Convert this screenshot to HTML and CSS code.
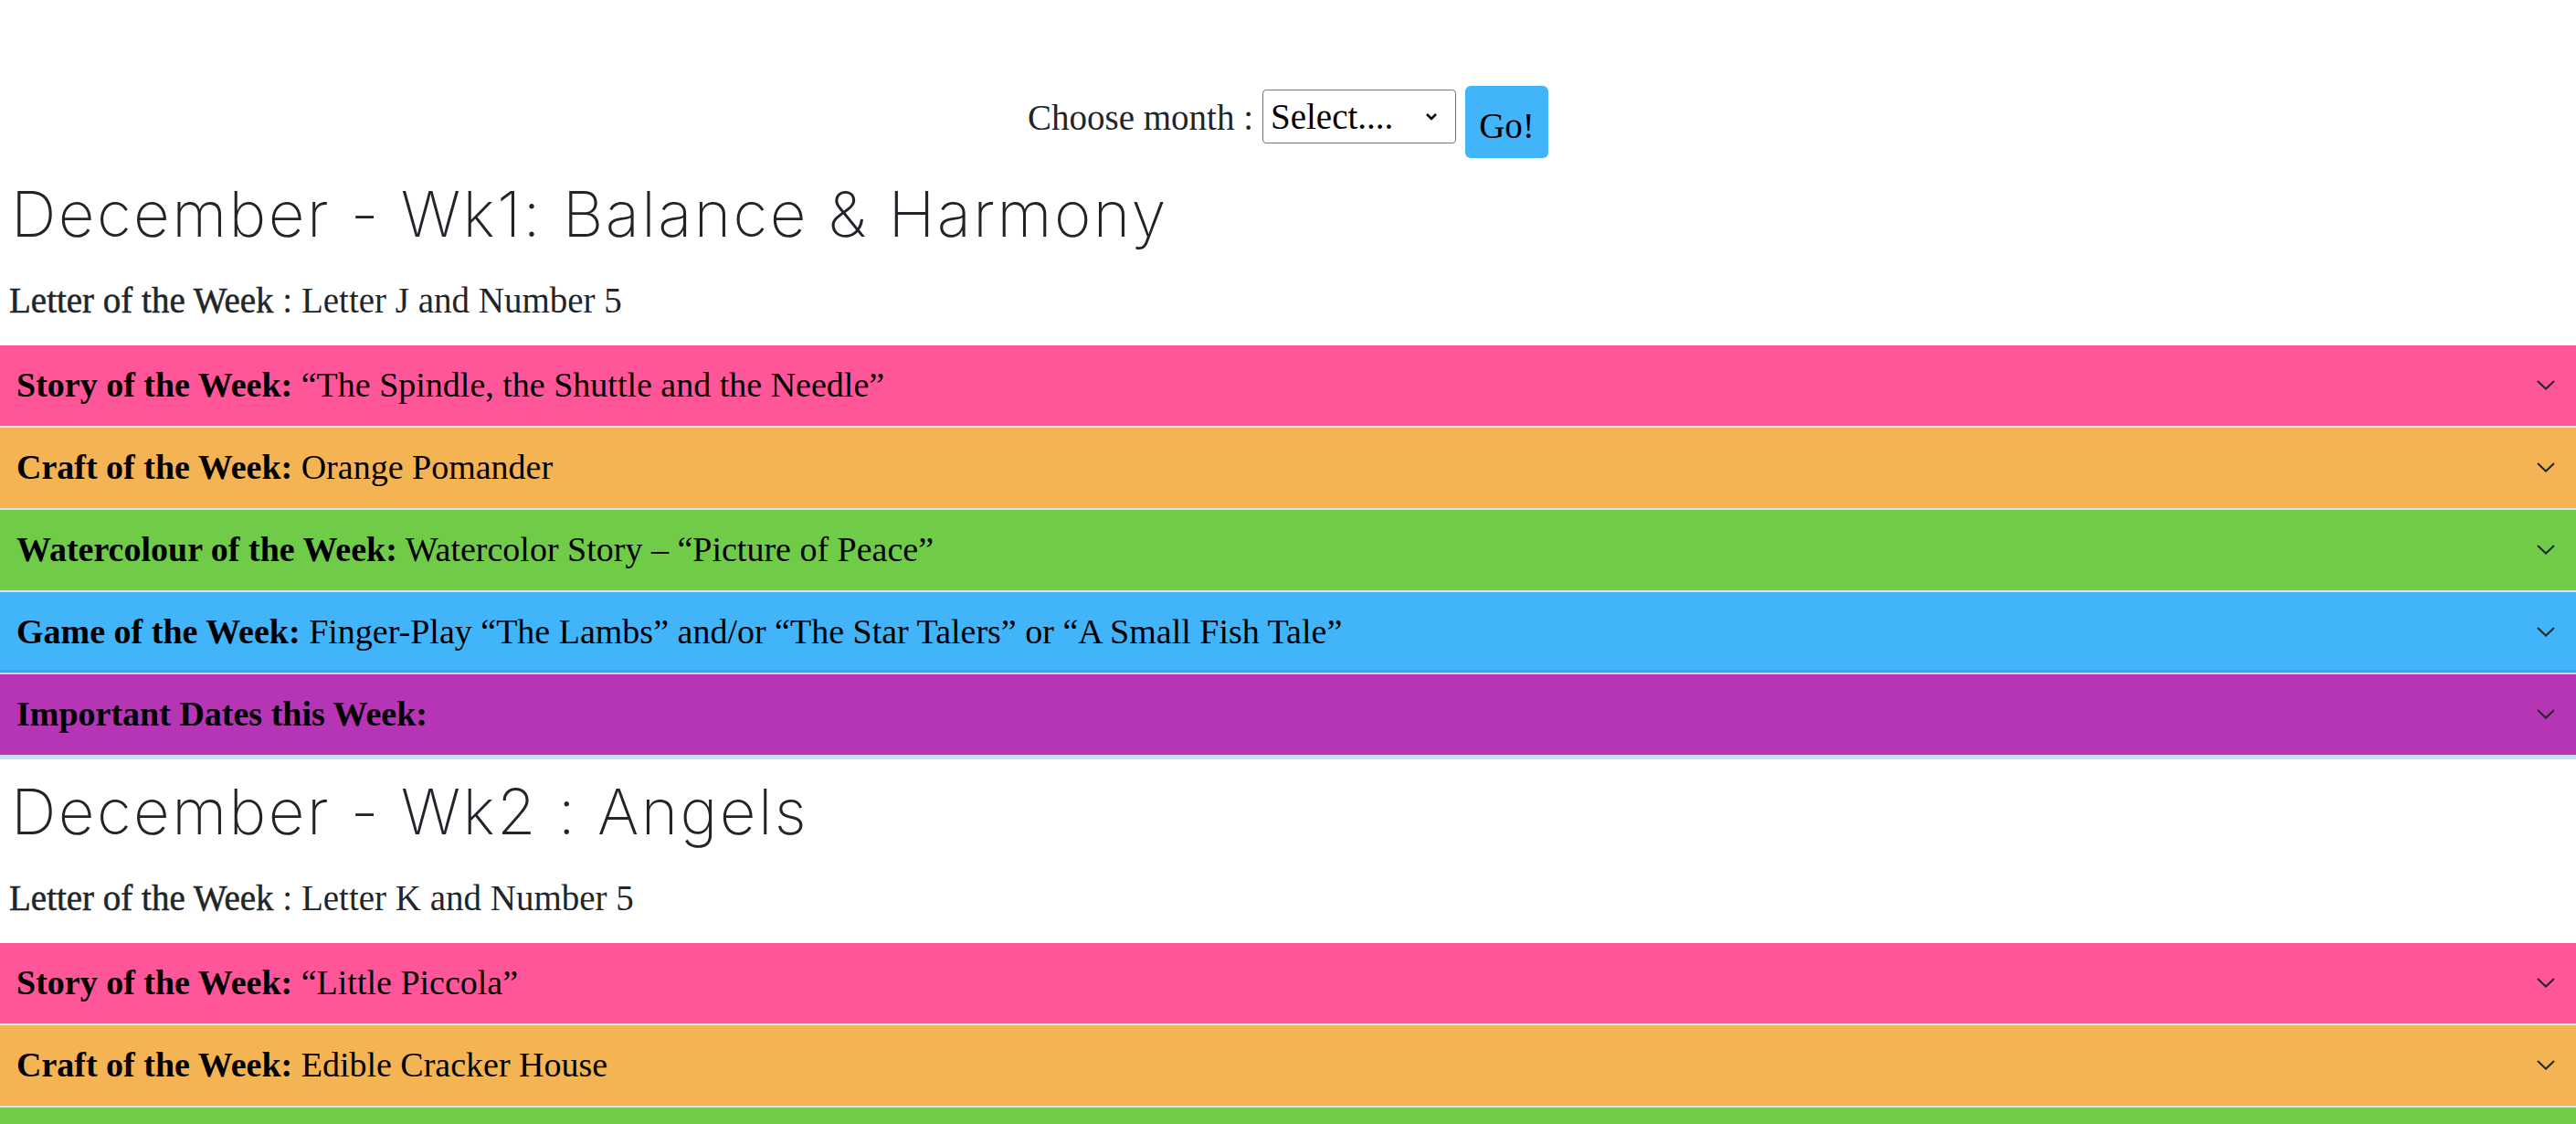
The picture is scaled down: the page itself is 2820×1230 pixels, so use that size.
FILE: index.html
```html
<!DOCTYPE html>
<html lang="en">
<head>
<meta charset="utf-8">
<title>Weekly Curriculum</title>
<link rel="stylesheet" href="styles.css">
</head>
<body>
<form class="month-form">
  <label class="month-label" for="month">Choose month :</label>
  <div class="select-wrap">
    <select id="month" class="month-select">
      <option>Select....</option>
      <option>November</option>
      <option>December</option>
      <option>January</option>
    </select>
    <svg class="select-chev" width="14" height="9" viewBox="0 0 14 9"><polyline points="2,2 7,7 12,2" fill="none" stroke="#000" stroke-width="2.6"/></svg>
  </div>
  <button type="button" class="go-btn">Go!</button>
</form>

<section class="week">
  <h2 class="week-title">December - Wk1: Balance &amp; Harmony</h2>
  <p class="letter"><span class="letter-label">Letter of the Week</span> : Letter J and Number 5</p>
  <div class="accordion">
    <div class="acc-item pink"><div class="acc-text"><b>Story of the Week:</b> “The Spindle, the Shuttle and the Needle”</div><svg class="chev" width="20" height="11" viewBox="0 0 20 11"><polyline points="1,1 10,9.5 19,1" fill="none" stroke="#212529" stroke-width="2"/></svg></div>
    <div class="acc-item orange"><div class="acc-text"><b>Craft of the Week:</b> Orange Pomander</div><svg class="chev" width="20" height="11" viewBox="0 0 20 11"><polyline points="1,1 10,9.5 19,1" fill="none" stroke="#212529" stroke-width="2"/></svg></div>
    <div class="acc-item green"><div class="acc-text"><b>Watercolour of the Week:</b> Watercolor Story – “Picture of Peace”</div><svg class="chev" width="20" height="11" viewBox="0 0 20 11"><polyline points="1,1 10,9.5 19,1" fill="none" stroke="#212529" stroke-width="2"/></svg></div>
    <div class="acc-item blue"><div class="acc-text"><b>Game of the Week:</b> Finger-Play “The Lambs” and/or “The Star Talers” or “A Small Fish Tale”</div><svg class="chev" width="20" height="11" viewBox="0 0 20 11"><polyline points="1,1 10,9.5 19,1" fill="none" stroke="#212529" stroke-width="2"/></svg></div>
    <div class="acc-item purple last"><div class="acc-text"><b>Important Dates this Week:</b></div><svg class="chev" width="20" height="11" viewBox="0 0 20 11"><polyline points="1,1 10,9.5 19,1" fill="none" stroke="#212529" stroke-width="2"/></svg></div>
  </div>
</section>

<section class="week">
  <h2 class="week-title">December - Wk2 : Angels</h2>
  <p class="letter"><span class="letter-label">Letter of the Week</span> : Letter K and Number 5</p>
  <div class="accordion">
    <div class="acc-item pink"><div class="acc-text"><b>Story of the Week:</b> “Little Piccola”</div><svg class="chev" width="20" height="11" viewBox="0 0 20 11"><polyline points="1,1 10,9.5 19,1" fill="none" stroke="#212529" stroke-width="2"/></svg></div>
    <div class="acc-item orange"><div class="acc-text"><b>Craft of the Week:</b> Edible Cracker House</div><svg class="chev" width="20" height="11" viewBox="0 0 20 11"><polyline points="1,1 10,9.5 19,1" fill="none" stroke="#212529" stroke-width="2"/></svg></div>
    <div class="acc-item green"><div class="acc-text"><b>Watercolour of the Week:</b> Watercolor Story</div><svg class="chev" width="20" height="11" viewBox="0 0 20 11"><polyline points="1,1 10,9.5 19,1" fill="none" stroke="#212529" stroke-width="2"/></svg></div>
    <div class="acc-item blue"><div class="acc-text"><b>Game of the Week:</b> Finger-Play</div><svg class="chev" width="20" height="11" viewBox="0 0 20 11"><polyline points="1,1 10,9.5 19,1" fill="none" stroke="#212529" stroke-width="2"/></svg></div>
    <div class="acc-item purple last"><div class="acc-text"><b>Important Dates this Week:</b></div><svg class="chev" width="20" height="11" viewBox="0 0 20 11"><polyline points="1,1 10,9.5 19,1" fill="none" stroke="#212529" stroke-width="2"/></svg></div>
  </div>
</section>
</body>
</html>
```
FILE: styles.css
```css
* { box-sizing: border-box; }
html, body { margin: 0; padding: 0; background: #fff; }
body {
  font-family: "Liberation Serif", "Times New Roman", serif;
  font-size: 39px;
  color: #212529;
}
.month-form {
  display: flex;
  justify-content: center;
  align-items: flex-start;
  padding-top: 94px;
}
.month-label {
  margin-top: 13px;
  line-height: 44px;
  margin-right: 10px;
}
.select-wrap {
  position: relative;
  margin-top: 4px;
}
.month-select {
  display: block;
  width: 212px;
  height: 59px;
  -webkit-appearance: none;
  appearance: none;
  font-family: "Liberation Serif", serif;
  font-size: 39px;
  color: #000;
  border: 1px solid #767676;
  border-radius: 4px;
  background: #fff;
  padding: 0 4px 0 8px;
}
.select-chev {
  position: absolute;
  right: 20px;
  top: 25px;
  pointer-events: none;
}
.go-btn {
  margin-left: 10px;
  width: 91px;
  height: 79px;
  background: #42b4fa;
  border: none;
  border-radius: 6px;
  font-family: "Liberation Serif", serif;
  font-size: 39px;
  color: #000;
  padding: 8px 0 0;
}
.week-title {
  margin: 16px 0 0;
  padding-left: 12px;
  font-family: "Inter", "Lato", sans-serif;
  font-weight: 200;
  font-size: 69px;
  letter-spacing: 2.4px;
  line-height: 83px;
  color: #212529;
}
.week:first-of-type .week-title { margin-top: 20px; }
.letter {
  margin: 24px 0 20px;
  padding-left: 10px;
  line-height: 58px;
}
.letter-label { -webkit-text-stroke: 0.5px #212529; }
.accordion { display: flex; flex-direction: column; }
.acc-item {
  display: flex;
  align-items: center;
  justify-content: space-between;
  height: 90px;
  padding: 0 23px 2px 18px;
  border-bottom: 2px solid #dee2e6;
  color: #000;
}
.acc-text { font-size: 38px; line-height: 47px; }
.acc-text b { font-weight: bold; }
.chev { display: block; }
.pink { background: #ff5599; }
.orange { background: #f5b453; }
.green { background: #70cc48; }
.blue {
  background: #42b4fa;
  border-bottom: 2px solid #c7d5e8;
  box-shadow: inset 0 -3px 0 #3aa3f8;
}
.purple { background: #b535b5; }
.last { height: 93px; border-bottom: 5px solid #c6dbf6; }
```
